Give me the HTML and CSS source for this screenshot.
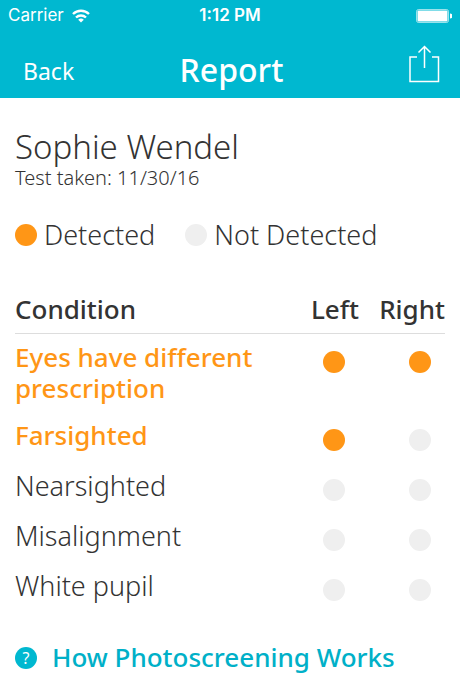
FILE: index.html
```html
<!DOCTYPE html>
<html lang="en">
<head>
    <meta charset="UTF-8">
    <meta name="viewport" content="width=device-width, initial-scale=1.0">
    <title>Report</title>
    <link rel="stylesheet" href="styles.css">
</head>
<body>

    <header>
        <div class="status-bar">
            <div class="carrier">
                <span>Carrier</span>
                <svg class="wifi" width="18" height="14" viewBox="0 0 18 14" fill="none" stroke="currentColor" stroke-width="2.400">
                    <path d="M1 5a11.500 11.500 0 0 1 16 0"/>
                    <path d="M4 8.500a7.300 7.300 0 0 1 10 0"/>
                    <path d="M9 13.500L6.200 10.800a4 4 0 0 1 5.600 0z" fill="currentColor" stroke="none"/>
                </svg>
            </div>
            <span class="clock">1:12 PM</span>
            <svg class="battery" width="36" height="14" viewBox="0 0 36 14">
                <rect x="0.500" y="0.500" width="32" height="13" rx="2" fill="none" stroke="#fff" stroke-opacity="0.600"/>
                <rect x="1.500" y="1.500" width="30" height="11" rx="1" fill="#fff"/>
                <path d="M34 4.500a2.500 2.500 0 0 1 0 5z" fill="#fff"/>
            </svg>
        </div>
        <nav>
            <a class="back" href="#">Back</a>
            <h1>Report</h1>
            <button class="share" type="button" aria-label="Share">
                <svg width="32" height="38" viewBox="0 0 32 38" fill="none" stroke="currentColor" stroke-width="1.500">
                    <path d="M9 12H2v24.500h28.500V12H24"/>
                    <path d="M16.500 23V1.500M10.500 7.500l6-6 6 6"/>
                </svg>
            </button>
        </nav>
    </header>

    <main>
        <h2>Sophie Wendel</h2>
        <p class="test-date">Test taken: 11/30/16</p>

        <ul class="legend">
            <li><span class="dot detected"></span>Detected</li>
            <li><span class="dot"></span>Not Detected</li>
        </ul>

        <table>
            <thead>
                <tr>
                    <th>Condition</th>
                    <th class="eye">Left</th>
                    <th class="eye">Right</th>
                </tr>
            </thead>
            <tbody>
                <tr class="found">
                    <td>Eyes have different prescription</td>
                    <td class="eye"><span class="dot detected"></span></td>
                    <td class="eye"><span class="dot detected"></span></td>
                </tr>
                <tr class="found">
                    <td>Farsighted</td>
                    <td class="eye"><span class="dot detected"></span></td>
                    <td class="eye"><span class="dot"></span></td>
                </tr>
                <tr>
                    <td>Nearsighted</td>
                    <td class="eye"><span class="dot"></span></td>
                    <td class="eye"><span class="dot"></span></td>
                </tr>
                <tr>
                    <td>Misalignment</td>
                    <td class="eye"><span class="dot"></span></td>
                    <td class="eye"><span class="dot"></span></td>
                </tr>
                <tr>
                    <td>White pupil</td>
                    <td class="eye"><span class="dot"></span></td>
                    <td class="eye"><span class="dot"></span></td>
                </tr>
            </tbody>
        </table>

        <a class="help" href="#"><span class="help-icon">?</span>How Photoscreening Works</a>
    </main>

</body>
</html>
```
FILE: styles.css
```css
* {
    box-sizing: border-box;
}
body {
    margin: 0;
    font-family: 'Noto Sans', 'Open Sans', sans-serif;
    font-size: 26px;
    font-weight: 300;
    line-height: 31px;
    color: #333;
    background-color: #fff;
}
header {
    color: #fff;
    background-color: #00b8d0;
}
.status-bar {
    display: grid;
    grid-template-columns: 1fr auto 1fr;
    align-items: center;
    height: 30px;
    padding: 0 8px;
    font-family: Inter, Roboto, sans-serif;
    font-size: 17px;
    font-weight: 400;
}
.carrier {
    display: flex;
    align-items: center;
    gap: 8px;
}
.clock {
    font-weight: 600;
}
.battery {
    justify-self: end;
}
nav {
    display: grid;
    grid-template-columns: 1fr auto 1fr;
    align-items: center;
    height: 68px;
    padding: 0 20px 0 23px;
}
.back {
    padding-top: 14px;
    font-size: 23px;
    font-weight: 400;
    color: #fff;
    text-decoration: none;
}
h1 {
    margin: 0;
    padding-top: 10px;
    font-size: 32px;
    font-weight: 500;
}
.share {
    justify-self: end;
    display: flex;
    padding: 0;
    border: none;
    background: none;
    color: #fff;
    cursor: pointer;
}
main {
    padding: 31px 15px 16px;
}
h2 {
    margin: 0;
    font-size: 33px;
    font-weight: 300;
    line-height: 36px;
}
.test-date {
    margin: 0;
    font-size: 20px;
    line-height: 26px;
}
.legend {
    display: flex;
    gap: 30px;
    margin: 28px 0 44px;
    padding: 0;
    font-size: 27px;
    list-style: none;
}
.legend li {
    display: flex;
    align-items: center;
    gap: 7px;
}
.dot {
    display: block;
    width: 22px;
    height: 22px;
    border-radius: 50%;
    background-color: #efefef;
}
.dot.detected {
    background-color: #ff9616;
}
table {
    width: 100%;
    border-collapse: collapse;
}
th {
    padding: 0 0 8px;
    font-weight: 500;
    text-align: left;
    border-bottom: 1px solid #ddd;
}
td {
    height: 50px;
    padding: 8px 0;
    font-size: 27px;
    vertical-align: top;
}
.eye {
    width: 86px;
    text-align: right;
}
td.eye {
    padding: 17px 14px 0 0;
}
.eye .dot {
    margin-left: auto;
}
.found td {
    font-size: 26px;
    font-weight: 500;
    color: #ff9616;
}
.help {
    display: flex;
    align-items: center;
    gap: 15px;
    margin-top: 30px;
    font-weight: 500;
    color: #00b0c8;
    text-decoration: none;
}
.help-icon {
    width: 22px;
    height: 22px;
    border-radius: 50%;
    font-size: 16px;
    font-weight: 400;
    line-height: 22px;
    text-align: center;
    color: #fff;
    background-color: #00b8d0;
}
```
